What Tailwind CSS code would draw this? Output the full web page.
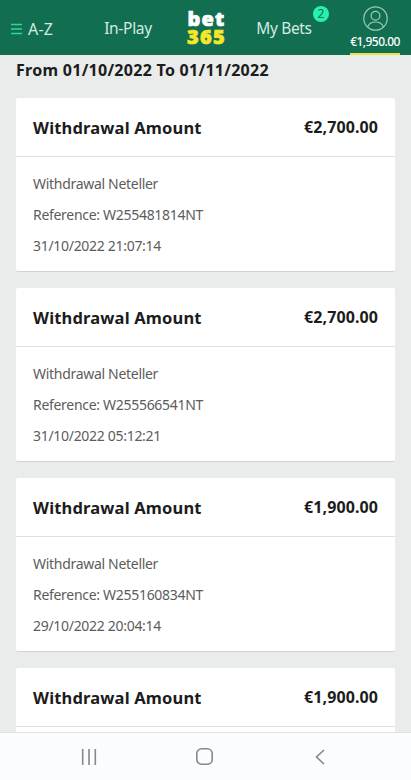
<!DOCTYPE html>
<html lang="en">
<head>
  <meta charset="UTF-8" />
  <meta name="viewport" content="width=device-width, initial-scale=1.0" />
  <script src="https://cdn.jsdelivr.net/npm/@tailwindcss/browser@4"></script>
  <title>bet365 - History</title>
</head>
<body class="bg-[#e9ecea] font-['Noto_Sans','Open_Sans',sans-serif]">
  <div class="flex h-[780px] w-[411px] flex-col overflow-hidden">
    <header class="flex h-[55px] shrink-0 bg-[#126e51] text-[#d5eae0]">
      <div class="flex w-[87px] items-center gap-[6px] pl-[11px] pt-[2px]">
        <svg class="h-3 w-[11px]" viewBox="0 0 11 12" fill="none" stroke="#2fd79b" stroke-width="1.3">
          <path d="M0 1.5h11M0 6h11M0 10.5h11" />
        </svg>
        <span class="text-[16px] tracking-[0.2px]">A-Z</span>
      </div>
      <div class="flex w-[82px] items-center justify-center pt-[3px] text-[15.5px] tracking-[-0.3px]">In-Play</div>
      <div class="flex w-[75px] flex-col items-center pt-[10px] text-[20px] font-black leading-[18px]">
        <span class="text-white tracking-[1.2px] [-webkit-text-stroke:0.7px_#fff]">bet</span>
        <span class="text-[#f7e72a] tracking-[1.2px] [-webkit-text-stroke:0.7px_#f7e72a]">365</span>
      </div>
      <div class="relative flex w-[80px] items-center justify-center pt-[2px] text-[15.5px] tracking-[-0.35px]">
        My Bets
        <span class="absolute left-[69px] top-[6px] flex size-[16px] items-center justify-center rounded-full bg-[#27f0b0] text-[12px] tracking-normal text-[#126e51]">2</span>
      </div>
      <div class="ml-[26px] flex w-[50px] flex-col items-center border-b-2 border-[#e8e04c] pt-[6px]">
        <svg class="size-[25px] shrink-0" viewBox="0 0 25 25" fill="none" stroke="#9cc9b6" stroke-width="1.2">
          <circle cx="12.5" cy="12.5" r="11.7" />
          <circle cx="12.5" cy="9.7" r="4.4" />
          <path d="M4.7 21c1.2-3.6 4-5 7.8-5s6.6 1.4 7.8 5" />
        </svg>
        <span class="mt-[2px] whitespace-nowrap text-[12px] font-medium leading-[17px] tracking-[-0.55px] text-white">€1,950.00</span>
      </div>
    </header>

    <main class="min-h-0 flex-1 overflow-hidden px-4">
      <h1 class="mb-[12px] h-[31px] whitespace-nowrap text-[16px] font-bold leading-[31px] tracking-[0.28px] text-[#1c1c1c]">From 01/10/2022 To 01/11/2022</h1>
      <div class="flex flex-col gap-4" id="transactions"></div>
    </main>

    <nav class="flex h-12 shrink-0 items-center border-t border-[#dfe3e6] bg-[#fbfcfe] text-[#85878b]">
      <svg class="ml-[81px] h-4 w-4" viewBox="0 0 16 16" fill="none" stroke="currentColor" stroke-width="1.6">
        <path d="M1.7 0v16M8 0v16M14.3 0v16" />
      </svg>
      <svg class="ml-[99px] h-[17px] w-[17px]" viewBox="0 0 17 17" fill="none" stroke="currentColor" stroke-width="1.6">
        <rect x="0.8" y="0.8" width="15.4" height="15.4" rx="4.8" />
      </svg>
      <svg class="ml-[102px] h-4 w-[10px]" viewBox="0 0 10 16" fill="none" stroke="currentColor" stroke-width="1.6">
        <path d="M9 1L1.5 8L9 15" />
      </svg>
    </nav>
  </div>

  <script>
    const transactions = [
      { amount: "€2,700.00", reference: "W255481814NT", date: "31/10/2022 21:07:14" },
      { amount: "€2,700.00", reference: "W255566541NT", date: "31/10/2022 05:12:21" },
      { amount: "€1,900.00", reference: "W255160834NT", date: "29/10/2022 20:04:14" },
      { amount: "€1,900.00", reference: "", date: "" },
    ];

    const container = document.querySelector("#transactions");

    for (const item of transactions) {
      const card = document.createElement("section");
      card.className = "h-[174px] shrink-0 rounded-[2px] border-b border-[#cfd3d1] bg-white";
      card.innerHTML = `
        <div class="flex h-[59px] items-center justify-between border-b border-[#dfe1e0] px-[17px] font-bold text-[#1c1c1c]">
          <h2 class="pt-[2px] text-[16.5px] tracking-[0.17px]">Withdrawal Amount</h2>
          <span class="text-[16px] tracking-[0.1px]">${item.amount}</span>
        </div>
        <div class="px-[17px] pt-[11px] text-[14px] leading-[31px] tracking-[-0.3px] text-[#5c5c5c]">
          ${item.date ? `<p>Withdrawal Neteller</p><p>Reference: ${item.reference}</p><p>${item.date}</p>` : ""}
        </div>`;
      container.appendChild(card);
    }
  </script>
</body>
</html>
